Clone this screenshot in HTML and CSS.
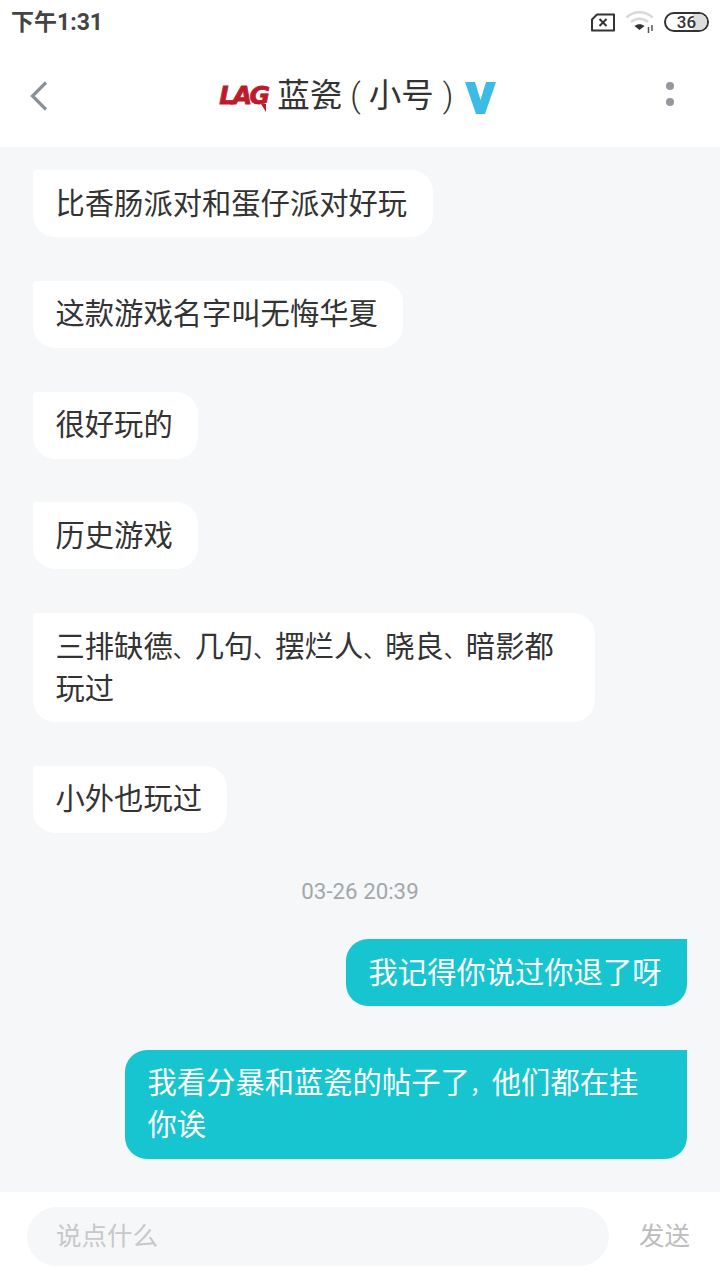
FILE: index.html
```html
<!DOCTYPE html>
<html lang="zh-CN">
<head>
    <meta charset="UTF-8">
    <meta name="viewport" content="width=device-width, initial-scale=1.0">
    <title>蓝瓷(小号)</title>
    <link rel="stylesheet" href="styles.css">
</head>
<body>
    <div class="app">
        <!-- Status bar -->
        <div class="status-bar">
            <span class="status-time">下午1:31</span>
            <div class="status-icons">
                <svg class="icon-sim" width="26" height="20" viewBox="0 0 26 20">
                    <path d="M7 2.5H24V18.500H2V7.500Z" fill="none" stroke="#333" stroke-width="2" stroke-linejoin="round"/>
                    <path d="M9.500 7L16.500 14M16.500 7L9.500 14" stroke="#333" stroke-width="2"/>
                </svg>
                <svg class="icon-wifi" width="30" height="26" viewBox="0 0 30 26">
                    <path d="M1.500 8.500C8.500 1.500 20.500 1.500 27.500 8.500" fill="none" stroke="#d9d9d9" stroke-width="2.500"/>
                    <path d="M6 13C11 8.500 18 8.500 23 13" fill="none" stroke="#d9d9d9" stroke-width="2.500"/>
                    <path d="M9.500 17C12.500 14.500 16.500 14.500 19.500 17L14.500 21Z" fill="#333"/>
                    <path d="M23.500 18V24M27 16V22" stroke="#555" stroke-width="1.500"/>
                </svg>
                <div class="battery"><span class="battery-level"></span><span class="battery-text">36</span></div>
            </div>
        </div>

        <!-- Title bar -->
        <header class="title-bar">
            <svg class="icon-back" width="18" height="30" viewBox="0 0 18 30">
                <path d="M16 1.500L2.500 15L16 28.500" fill="none" stroke="#8a9197" stroke-width="3.200"/>
            </svg>
            <div class="title">
                <span class="team-logo">LAG</span>
                <span class="title-name">蓝瓷<span class="paren-open">(</span>小号<span class="paren-close">)</span></span>
                <svg class="icon-v" width="31" height="32" viewBox="0 0 31 32">
                    <path d="M0 0H10L15.500 18L21 0H31L20 32H11Z" fill="#3bbce6"/>
                </svg>
            </div>
            <div class="more">
                <span class="dot"></span>
                <span class="dot"></span>
            </div>
        </header>

        <!-- Messages -->
        <main class="messages">
            <div class="bubble left">比香肠派对和蛋仔派对好玩</div>
            <div class="bubble left">这款游戏名字叫无悔华夏</div>
            <div class="bubble left">很好玩的</div>
            <div class="bubble left">历史游戏</div>
            <div class="bubble left wide">三排缺德<span class="punct">、</span>几句<span class="punct">、</span>摆烂人<span class="punct">、</span>晓良<span class="punct">、</span>暗影都<br>玩过</div>
            <div class="bubble left">小外也玩过</div>
            <div class="timestamp">03-26 20:39</div>
            <div class="bubble right">我记得你说过你退了呀</div>
            <div class="bubble right wide">我看分暴和蓝瓷的帖子了<span class="punct">，</span>他们都在挂<br>你诶</div>
        </main>

        <!-- Input -->
        <footer class="input-bar">
            <div class="input-box">说点什么</div>
            <span class="send">发送</span>
        </footer>
    </div>
</body>
</html>
```

FILE: styles.css
```css
* {
    margin: 0;
    padding: 0;
    box-sizing: border-box;
}

body {
    font-family: "Roboto", "Noto Sans CJK SC", sans-serif;
    background: #fff;
    color: #333;
}

.app {
    width: 720px;
    height: 1280px;
    display: flex;
    flex-direction: column;
    overflow: hidden;
}

.status-bar {
    height: 46px;
    padding: 0 11px 3px 11px;
    display: flex;
    align-items: center;
    justify-content: space-between;
}

.status-time {
    font-size: 23px;
    line-height: 28px;
    font-weight: 700;
    color: #444;
    margin-bottom: -2px;
}

.status-icons {
    display: flex;
    align-items: center;
    gap: 9px;
}

.battery {
    position: relative;
    width: 45px;
    height: 20px;
    border: 2px solid #333;
    border-radius: 10px;
    overflow: hidden;
    display: flex;
    align-items: center;
    justify-content: center;
}

.battery-level {
    position: absolute;
    top: 0;
    right: 0;
    bottom: 0;
    width: 14px;
    background: #ddd;
}

.battery-text {
    position: relative;
    font-size: 17px;
    font-weight: 500;
    line-height: 16px;
    color: #333;
}

.title-bar {
    height: 101px;
    padding: 0 46px 2px 30px;
    display: flex;
    align-items: center;
    justify-content: space-between;
}

.title {
    display: flex;
    align-items: center;
    margin-left: 1px;
}

.team-logo {
    position: relative;
    width: 50px;
    margin-right: 8px;
    font-family: "DejaVu Sans", sans-serif;
    font-size: 25px;
    line-height: 30px;
    font-weight: 700;
    font-style: italic;
    letter-spacing: -2.5px;
    color: #bd1b2c;
    -webkit-text-stroke: 0.8px #bd1b2c;
}

/* little spike under the G */
.team-logo::after {
    content: '';
    position: absolute;
    right: 3px;
    bottom: -1px;
    border-top: 8px solid #bd1b2c;
    border-left: 5px solid transparent;
}

.title-name {
    font-size: 32.5px;
    line-height: 44px;
    color: #333;
    white-space: nowrap;
}

.paren-open {
    font-weight: 300;
    margin: 0 8px;
}

.paren-close {
    font-weight: 300;
    margin: 0 11.5px 0 9px;
}

.icon-v {
    margin-top: 5px;
}

.more {
    display: flex;
    flex-direction: column;
    gap: 8px;
    margin-bottom: 3px;
}

.dot {
    width: 8px;
    height: 8px;
    border-radius: 50%;
    background: #96969e;
}

.messages {
    flex: 1;
    background: #f5f7f9;
    padding: 23px 33px 0 33px;
    display: flex;
    flex-direction: column;
    align-items: flex-start;
    gap: 43.75px;
}

.bubble {
    max-width: 562px;
    padding: 12.5px 25.5px 12.5px 22.5px;
    font-size: 29.3px;
    line-height: 42px;
    border-radius: 22px;
}

.bubble.wide {
    width: 562px;
}

.bubble.left {
    background: #fff;
    color: #333;
    border-top-left-radius: 4px;
}

.bubble.right {
    align-self: flex-end;
    background: #16c5cf;
    color: #fff;
    border-top-right-radius: 0;
}

/* punctuation sits tighter than a full CJK cell */
.punct {
    font-size: 22px;
    line-height: 1;
}

.timestamp {
    align-self: center;
    font-size: 22.3px;
    line-height: 28px;
    color: #a3a7ab;
    margin: 0.5px 0 -9.75px;
}

.input-bar {
    height: 88px;
    padding: 0 30px 0 27px;
    display: flex;
    align-items: center;
    justify-content: space-between;
}

.input-box {
    width: 582px;
    height: 59px;
    padding-left: 29px;
    border-radius: 30px;
    background: #f5f7f9;
    font-size: 25.5px;
    line-height: 59px;
    color: #c8c8c8;
}

.send {
    font-size: 25.5px;
    line-height: 36px;
    color: #bdbdbd;
    margin-bottom: 1px;
}
```
